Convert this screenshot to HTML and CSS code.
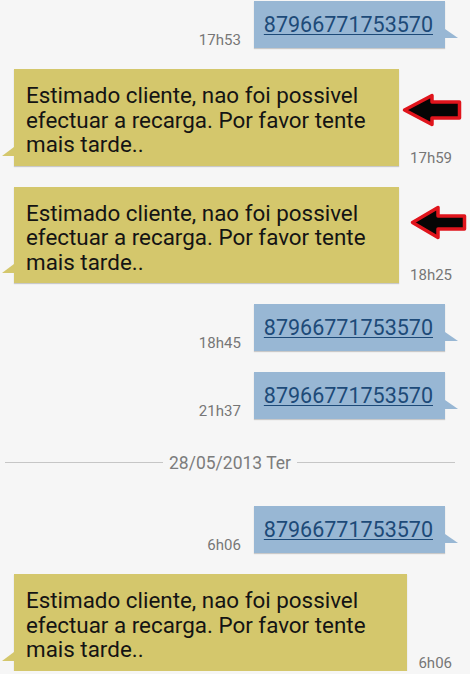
FILE: index.html
```html
<!DOCTYPE html>
<html lang="pt">
<head>
    <meta charset="UTF-8">
    <meta name="viewport" content="width=device-width, initial-scale=1.0">
    <title>Mensagens</title>
    <link rel="stylesheet" href="styles.css">
</head>
<body>
    <div class="thread">
        <div class="row out first">
            <span class="time">17h53</span>
            <div class="bubble blue"><a href="#">87966771753570</a></div>
        </div>
        <div class="row in">
            <div class="bubble yellow">Estimado cliente, nao foi possivel efectuar a recarga. Por favor tente mais tarde..</div>
            <span class="time">17h59</span>
            <svg class="mark mark-one" width="60" height="34" viewBox="0 0 60 34">
                <polygon points="2.5,17 30,2.5 30,9 57.5,9 57.5,25 30,25 30,31.5" fill="#050505" stroke="#e0141c" stroke-width="3.5" stroke-linejoin="round"/>
            </svg>
        </div>
        <div class="row in">
            <div class="bubble yellow">Estimado cliente, nao foi possivel efectuar a recarga. Por favor tente mais tarde..</div>
            <span class="time">18h25</span>
            <svg class="mark mark-two" width="57" height="35" viewBox="0 0 57 35">
                <polygon points="2.5,17.5 28,2.5 28,11 54.5,11 54.5,24 28,24 28,32.5" fill="#050505" stroke="#e0141c" stroke-width="3.5" stroke-linejoin="round"/>
            </svg>
        </div>
        <div class="row out">
            <span class="time">18h45</span>
            <div class="bubble blue"><a href="#">87966771753570</a></div>
        </div>
        <div class="row out">
            <span class="time">21h37</span>
            <div class="bubble blue"><a href="#">87966771753570</a></div>
        </div>
        <div class="date-sep">
            <span class="line"></span>
            <span class="date">28/05/2013 Ter</span>
            <span class="line"></span>
        </div>
        <div class="row out">
            <span class="time">6h06</span>
            <div class="bubble blue"><a href="#">87966771753570</a></div>
        </div>
        <div class="row in">
            <div class="bubble yellow">Estimado cliente, nao foi possivel efectuar a recarga. Por favor tente mais tarde..</div>
            <span class="time">6h06</span>
        </div>
    </div>
</body>
</html>
```

FILE: styles.css
```css
body {
    margin: 0;
    background-color: #f6f6f6;
    font-family: Roboto, "Liberation Sans", sans-serif;
    overflow: hidden;
}
.thread {
    display: flex;
    flex-direction: column;
    gap: 21px;
}
.row {
    display: flex;
    align-items: flex-end;
    position: relative;
}
.row.first {
    margin-top: 1px;
}
.row.out {
    justify-content: flex-end;
    gap: 13px;
    padding-right: 25px;
}
.row.in {
    gap: 11px;
    padding-left: 14px;
    padding-right: 18px;
}
.time {
    font-size: 15px;
    line-height: 18px;
    color: #767676;
    margin-bottom: -1px;
}
.bubble {
    position: relative;
    box-shadow: 0 1px 1px rgba(0, 0, 0, 0.18);
}
.blue {
    background-color: #98b7d4;
    padding: 11px 12px 11px 10px;
    font-size: 21.5px;
    line-height: 25px;
}
.blue a {
    color: #1d4a78;
    text-decoration: underline;
    text-decoration-thickness: 1px;
    text-underline-offset: 2px;
}
.blue::after {
    content: "";
    position: absolute;
    right: -13px;
    bottom: 10px;
    border-left: 13px solid #98b7d4;
    border-top: 9px solid transparent;
}
.yellow {
    flex: 1;
    background-color: #d4c76c;
    color: #141414;
    padding: 14px 12px 9px 12px;
    font-size: 22.4px;
    line-height: 24.5px;
}
.yellow::after {
    content: "";
    position: absolute;
    left: -12px;
    bottom: 10px;
    border-right: 12px solid #d4c76c;
    border-top: 9px solid transparent;
}
.date-sep {
    display: flex;
    align-items: center;
    height: 45px;
    padding: 0 15px 0 5px;
}
.line {
    flex: 1;
    border-top: 1px solid #c6c6c6;
}
.date {
    font-size: 17.5px;
    color: #7c7c7c;
    padding: 0 6px;
}
.mark {
    position: absolute;
}
.mark-one {
    left: 402px;
    top: 24px;
}
.mark-two {
    left: 410px;
    top: 18px;
}
```
